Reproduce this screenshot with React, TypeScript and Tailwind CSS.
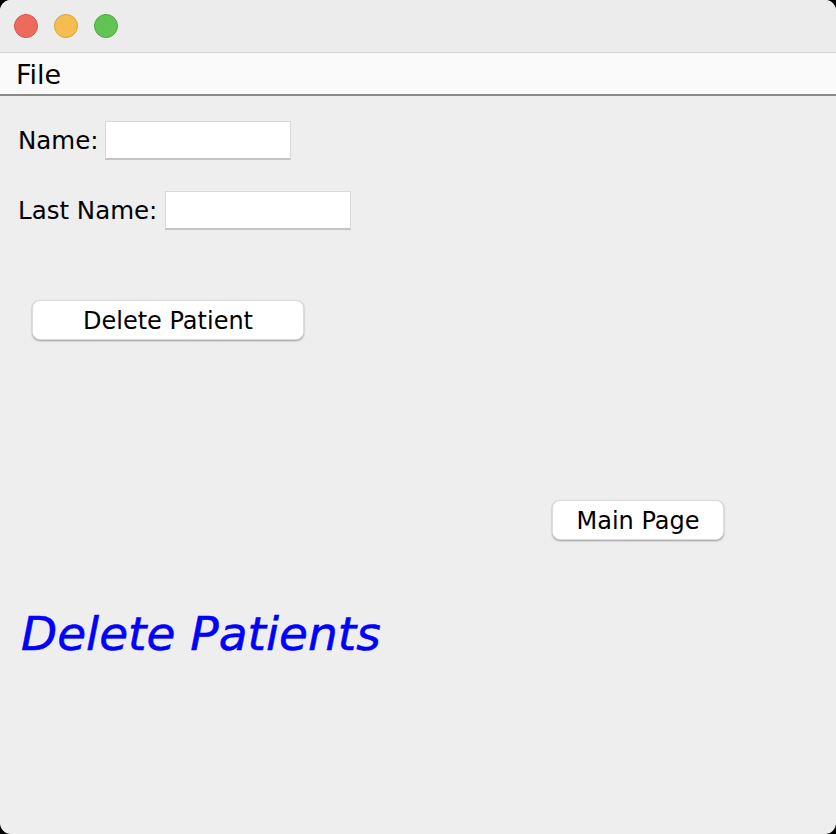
export default function App() {
  return (
    <div className="w-[836px] h-[834px] bg-black" style={{ fontFamily: '"DejaVu Sans", sans-serif' }}>
      <div className="w-full h-full rounded-[11px] overflow-hidden bg-[#eeeeee] flex flex-col">
        {/* Title bar */}
        <div className="h-[53px] bg-[#ececec] border-b border-[#d6d6d6] flex items-center gap-4 pl-[14px] shrink-0">
          <span className="w-6 h-6 rounded-full bg-[#ee6a5f] border border-[#d9534a]" />
          <span className="w-6 h-6 rounded-full bg-[#f5bd4f] border border-[#dea236]" />
          <span className="w-6 h-6 rounded-full bg-[#61c454] border border-[#4ea83f]" />
        </div>
        {/* Menu bar */}
        <div className="h-[43px] bg-[#fafafa] border-b-2 border-[#8a8a8a] flex items-center pl-[16px] pt-[2px] shrink-0">
          <span className="text-[27px] leading-none text-black">File</span>
        </div>

        <div className="flex flex-col text-black">
          <div className="mt-[25px] flex items-center pl-[18px] h-[39px]">
            <span className="text-[24.5px] leading-none pt-[2px]">Name:</span>
            <div className="ml-[6px] w-[186px] h-[39px] bg-white border border-[#d9d9d9] border-b-2 border-b-[#c4c4c4]" />
          </div>
          <div className="mt-[31px] flex items-center pl-[18px] h-[39px]">
            <span className="text-[24.5px] leading-none pt-[2px]">Last Name:</span>
            <div className="ml-[8px] w-[186px] h-[39px] bg-white border border-[#d9d9d9] border-b-2 border-b-[#c4c4c4]" />
          </div>

          <button className="mt-[70px] ml-[32px] w-[272px] h-[40px] bg-white rounded-[8px] shadow-[0_1px_2px_rgba(0,0,0,0.35)] border border-[#dcdcdc] text-[24px] leading-none flex items-center justify-center pt-[2px]">
            Delete Patient
          </button>

          <button className="mt-[160px] ml-[552px] w-[172px] h-[40px] bg-white rounded-[8px] shadow-[0_1px_2px_rgba(0,0,0,0.35)] border border-[#dcdcdc] text-[24px] leading-none flex items-center justify-center pt-[2px]">
            Main Page
          </button>

          <div className="mt-[70px] ml-[21px] text-[47px] leading-none italic text-[#0000ff] [-webkit-text-stroke:0.6px_#0000ff]">
            Delete Patients
          </div>
        </div>
      </div>
    </div>
  )
}
